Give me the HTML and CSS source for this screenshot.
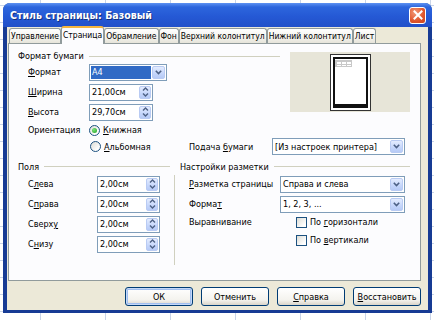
FILE: index.html
```html
<!DOCTYPE html>
<html lang="ru">
<head>
<meta charset="utf-8">
<title>Стиль страницы</title>
<link rel="stylesheet" href="styles.css">
</head>
<body>
<div class="window">
  <div class="titlebar">
    <span class="title">Стиль страницы: Базовый</span>
    <span class="close"><svg width="10" height="10" viewBox="0 0 10 10"><path d="M1.5 1.5L8.5 8.5M8.5 1.5L1.5 8.5" stroke="#fff" stroke-width="2" stroke-linecap="square"/></svg></span>
  </div>
  <div class="client">
    <div class="tabs">
      <span class="tab">Управление</span>
      <span class="tab active">Страница</span>
      <span class="tab">Обрамление</span>
      <span class="tab">Фон</span>
      <span class="tab">Верхний колонтитул</span>
      <span class="tab">Нижний колонтитул</span>
      <span class="tab">Лист</span>
    </div>
    <div class="panel">
      <div class="top">
        <div class="paper">
          <div class="ghead"><span>Формат бумаги</span></div>
          <div class="row ind">
            <span class="lbl l61"><u>Ф</u>ормат</span>
            <div class="box combo sel w78"><span class="val">A4</span><span class="dd"><svg width="7" height="5" viewBox="0 0 7 5"><path d="M0.8 0.8L3.5 3.5L6.2 0.8" fill="none" stroke="#4D6185" stroke-width="1.6"/></svg></span></div>
          </div>
          <div class="row ind">
            <span class="lbl l61"><u>Ш</u>ирина</span>
            <div class="box spin w64"><span class="val">21,00см</span><span class="sp"><svg width="7" height="12" viewBox="0 0 7 12"><path d="M1 4.5L3.5 2L6 4.5M1 7.5L3.5 10L6 7.5" fill="none" stroke="#4D6185" stroke-width="1.4"/></svg></span></div>
          </div>
          <div class="row ind">
            <span class="lbl l61"><u>В</u>ысота</span>
            <div class="box spin w64"><span class="val">29,70см</span><span class="sp"><svg width="7" height="12" viewBox="0 0 7 12"><path d="M1 4.5L3.5 2L6 4.5M1 7.5L3.5 10L6 7.5" fill="none" stroke="#4D6185" stroke-width="1.4"/></svg></span></div>
          </div>
          <div class="row ind short">
            <span class="lbl l61">Ориентация</span>
            <span class="radio on"></span><span><u>К</u>нижная</span>
          </div>
        </div>
        <div class="preview">
          <div class="page"><div class="inner"><div class="tbl"></div></div></div>
        </div>
      </div>
      <div class="row feed">
        <div class="feedleft"><span class="radio"></span><span><u>А</u>льбомная</span></div>
        <span class="lbl l83">Подача <u>б</u>умаги</span>
        <div class="box combo w133"><span class="val">[Из настроек принтера]</span><span class="dd"><svg width="7" height="5" viewBox="0 0 7 5"><path d="M0.8 0.8L3.5 3.5L6.2 0.8" fill="none" stroke="#4D6185" stroke-width="1.6"/></svg></span></div>
      </div>
      <div class="bottom">
        <div class="margins">
          <div class="ghead tall"><span>Поля</span></div>
          <div class="row ind">
            <span class="lbl l69">С<u>л</u>ева</span>
            <div class="box spin w63"><span class="val">2,00см</span><span class="sp"><svg width="7" height="12" viewBox="0 0 7 12"><path d="M1 4.5L3.5 2L6 4.5M1 7.5L3.5 10L6 7.5" fill="none" stroke="#4D6185" stroke-width="1.4"/></svg></span></div>
          </div>
          <div class="row ind">
            <span class="lbl l69">С<u>п</u>рава</span>
            <div class="box spin w63"><span class="val">2,00см</span><span class="sp"><svg width="7" height="12" viewBox="0 0 7 12"><path d="M1 4.5L3.5 2L6 4.5M1 7.5L3.5 10L6 7.5" fill="none" stroke="#4D6185" stroke-width="1.4"/></svg></span></div>
          </div>
          <div class="row ind">
            <span class="lbl l69">Сверх<u>у</u></span>
            <div class="box spin w63"><span class="val">2,00см</span><span class="sp"><svg width="7" height="12" viewBox="0 0 7 12"><path d="M1 4.5L3.5 2L6 4.5M1 7.5L3.5 10L6 7.5" fill="none" stroke="#4D6185" stroke-width="1.4"/></svg></span></div>
          </div>
          <div class="row ind">
            <span class="lbl l69">С<u>н</u>изу</span>
            <div class="box spin w63"><span class="val">2,00см</span><span class="sp"><svg width="7" height="12" viewBox="0 0 7 12"><path d="M1 4.5L3.5 2L6 4.5M1 7.5L3.5 10L6 7.5" fill="none" stroke="#4D6185" stroke-width="1.4"/></svg></span></div>
          </div>
        </div>
        <div class="vsep"></div>
        <div class="layout">
          <div class="ghead tall"><span>Настройки разметки</span></div>
          <div class="row ind9">
            <span class="lbl l91"><u>Р</u>азметка страницы</span>
            <div class="box combo w125"><span class="val">Справа и слева</span><span class="dd"><svg width="7" height="5" viewBox="0 0 7 5"><path d="M0.8 0.8L3.5 3.5L6.2 0.8" fill="none" stroke="#4D6185" stroke-width="1.6"/></svg></span></div>
          </div>
          <div class="row ind9">
            <span class="lbl l91">Форма<u>т</u></span>
            <div class="box combo w125"><span class="val">1, 2, 3, ...</span><span class="dd"><svg width="7" height="5" viewBox="0 0 7 5"><path d="M0.8 0.8L3.5 3.5L6.2 0.8" fill="none" stroke="#4D6185" stroke-width="1.6"/></svg></span></div>
          </div>
          <div class="row ind9 short">
            <span class="lbl l107">Выравнивание</span>
            <span class="check"></span><span>По <u>г</u>оризонтали</span>
          </div>
          <div class="row ind9">
            <span class="lbl l107"></span>
            <span class="check"></span><span>По <u>в</u>ертикали</span>
          </div>
        </div>
      </div>
    </div>
    <div class="buttons">
      <span class="btn def">ОК</span>
      <span class="btn">Отменить</span>
      <span class="btn"><u>С</u>правка</span>
      <span class="btn"><u>В</u>осстановить</span>
    </div>
  </div>
</div>
</body>
</html>
```
FILE: styles.css
```css
* { box-sizing: border-box; }
body {
  margin: 0;
  width: 434px;
  height: 320px;
  overflow: hidden;
  font-family: "DejaVu Sans Condensed", "Liberation Sans", Arial, sans-serif;
  font-size: 9px;
  color: #000;
  background-color: #fff;
  background-image: linear-gradient(to right, #C9D4E8 1px, transparent 1px), linear-gradient(#C9D4E8 1px, transparent 1px);
  background-size: 65px 100%, 100% 17px;
  background-position: 40px 0, 0 5px;
}
u { text-decoration: underline; text-underline-offset: 1px; }
.window {
  margin: 3px 0 0 3px;
  width: 429px;
  background: #173B94;
  border-radius: 7px 7px 0 0;
  padding: 0 4px 3px;
}
.titlebar {
  margin: 0 -4px;
  height: 24px;
  border-radius: 7px 7px 0 0;
  background: linear-gradient(#5E92F2, #2D66DD 4px, #2559D5 55%, #2150C9);
  display: flex;
  align-items: center;
  justify-content: space-between;
  padding: 0 6px 0 7px;
}
.title {
  color: #fff;
  font-weight: bold;
  font-size: 10.5px;
  text-shadow: 1px 1px 0 #13307E;
}
.close {
  width: 17px;
  height: 17px;
  border: 1px solid #fff;
  border-radius: 3px;
  background: radial-gradient(circle at 35% 30%, #F29A78, #E0552C 60%, #C8431E);
  display: flex;
  align-items: center;
  justify-content: center;
}
.client {
  background: #ECE9D8;
  padding: 0 3px 4px 1px;
}
.tabs {
  display: flex;
  height: 16px;
  align-items: flex-end;
  padding-left: 1px;
}
.tab {
  height: 15px;
  padding: 0 1px;
  font-size: 8.5px;
  border: 1px solid #919B9C;
  border-bottom: 0;
  border-radius: 3px 3px 0 0;
  background: linear-gradient(#FFFFFF, #F3F2EC 60%, #E6E4DA);
  display: flex;
  align-items: center;
  white-space: nowrap;
}
.tab.active {
  height: 18px;
  margin-bottom: -1px;
  background: #FCFCFE;
  border-top: 2px solid #F5B53F;
  position: relative;
  z-index: 1;
  padding-bottom: 2px;
}
.panel {
  margin: 0 4px 0 0;
  height: 238px;
  border: 1px solid #919B9C;
  background: #FCFCFE;
  padding: 6px 0 0 9px;
}
.top { display: flex; }
.paper { width: 262px; }
.preview {
  margin: 2px 0 0 10px;
  width: 120px;
  height: 60px;
  background: #E7E5D8;
  display: flex;
  justify-content: center;
  align-items: center;
}
.page {
  width: 41px;
  height: 57px;
  border: 1px solid #333;
  background: #fff;
  padding: 2px;
}
.inner {
  height: 100%;
  border: 2px solid #111;
  border-top-width: 2px;
  border-bottom-width: 4px;
  background: #fff;
  padding: 1px 0 0 0;
}
.tbl {
  width: 17px;
  height: 7px;
  border: 1px solid #C8C8C8;
  background-image: linear-gradient(to right, #C8C8C8 1px, transparent 1px), linear-gradient(#C8C8C8 1px, transparent 1px);
  background-size: 5px 100%, 100% 3px;
}
.ghead {
  height: 12px;
  display: flex;
  align-items: center;
  gap: 5px;
  white-space: nowrap;
}
.ghead.tall { height: 15px; }
.ghead::after {
  content: "";
  flex: 1;
  border-top: 1px solid #D0D0BF;
}
.row {
  display: flex;
  align-items: center;
  height: 20px;
  white-space: nowrap;
}
.row.short { height: 16px; }
.ind { padding-left: 10px; }
.ind9 { padding-left: 9px; }
.lbl { flex: none; }
.l61 { width: 61px; }
.l69 { width: 69px; }
.l83 { width: 83px; }
.l91 { width: 91px; }
.l107 { width: 107px; }
.w63 { width: 63px; }
.w64 { width: 64px; }
.w78 { width: 78px; }
.w125 { width: 125px; }
.w133 { width: 133px; }
.box {
  height: 17px;
  border: 1px solid #7F9DB9;
  background: #fff;
  display: flex;
  align-items: stretch;
  padding: 1px;
  flex: none;
}
.box .val {
  flex: 1;
  padding-left: 1px;
  display: flex;
  align-items: center;
  overflow: hidden;
}
.combo.sel .val {
  background: #316AC5;
  color: #fff;
  margin-right: 1px;
}
.dd, .sp {
  width: 13px;
  border: 1px solid #B9CBF3;
  border-radius: 2px;
  background: linear-gradient(#E4ECFE, #C5D6FB 60%, #B6CAF6);
  display: flex;
  align-items: center;
  justify-content: center;
}
.sp { width: 12px; }
.radio, .check {
  width: 11px;
  height: 11px;
  border: 1px solid #1C5180;
  background: linear-gradient(135deg, #DCDCD5, #FFFFFF 80%);
  margin-right: 3px;
  flex: none;
  display: flex;
  align-items: center;
  justify-content: center;
}
.radio { border-radius: 50%; }
.radio.on::after {
  content: "";
  width: 5px;
  height: 5px;
  border-radius: 50%;
  background: radial-gradient(circle at 35% 35%, #7BE37B, #21A121);
}
.feed { height: 17px; }
.feedleft {
  width: 171px;
  padding-left: 72px;
  display: flex;
  align-items: center;
  flex: none;
}
.bottom {
  display: flex;
  margin-top: 4px;
}
.margins { width: 152px; }
.vsep {
  width: 1px;
  height: 90px;
  background: #D0D0BF;
  margin: 16px 0 0 4px;
}
.layout {
  margin-left: 5px;
  width: 230px;
}
.buttons {
  display: flex;
  justify-content: flex-end;
  gap: 8px;
  padding: 6px 4px 0 0;
}
.btn {
  width: 68px;
  height: 19px;
  border: 1px solid #003C74;
  border-radius: 3px;
  background: linear-gradient(#FFFFFF, #F4F3EE 70%, #D9D4C9);
  display: flex;
  align-items: center;
  justify-content: center;
}
.btn.def {
  box-shadow: inset 0 0 0 1px #C4D8F8, inset 0 0 0 2px #A0BEEF;
}
```
